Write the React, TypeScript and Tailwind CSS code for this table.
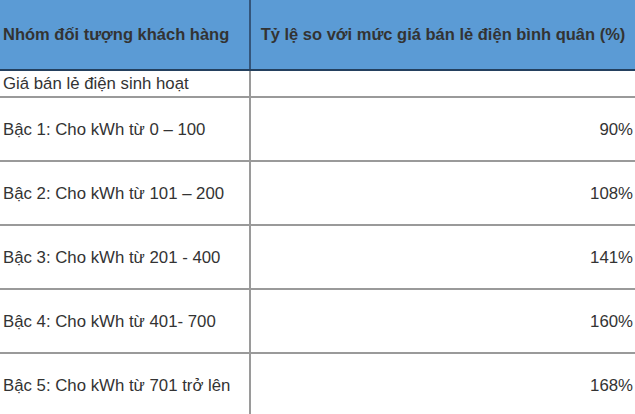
const rows = [
  { name: "Bậc 1: Cho kWh từ 0 – 100", value: "90%" },
  { name: "Bậc 2: Cho kWh từ 101 – 200", value: "108%" },
  { name: "Bậc 3: Cho kWh từ 201 - 400", value: "141%" },
  { name: "Bậc 4: Cho kWh từ 401- 700", value: "160%" },
  { name: "Bậc 5: Cho kWh từ 701 trở lên", value: "168%" },
];

export default function App() {
  return (
    <div
      className="w-[635px] h-[414px] overflow-hidden bg-white text-[16.8px] text-[#333]"
      style={{ fontFamily: '"Liberation Sans", Arial, sans-serif' }}
    >
      {/* header */}
      <div className="flex h-[71px] bg-[#5b9bd5] border-b-2 border-[#24405e] font-bold text-[16.5px]">
        <div className="w-[249px] shrink-0 flex items-center pl-[3px] whitespace-nowrap">Nhóm đối tượng khách hàng</div>
        <div className="w-[2px] shrink-0 bg-[#34557a]" />
        <div className="flex-1 flex items-center justify-center whitespace-nowrap">
          Tỷ lệ so với mức giá bán lẻ điện bình quân (%)
        </div>
      </div>

      <div className="flex h-[27px] border-b-2 border-[#9a9a9a]">
        <div className="w-[249px] shrink-0 flex items-center pl-[3px]">Giá bán lẻ điện sinh hoạt</div>
        <div className="w-[2px] shrink-0 bg-[#9a9a9a]" />
        <div className="flex-1" />
      </div>

      {rows.map((r) => (
        <div key={r.name} className="flex h-[64px] border-b-2 border-[#9a9a9a]">
          <div className="w-[249px] shrink-0 flex items-center pl-[3px] pt-[2px]">{r.name}</div>
          <div className="w-[2px] shrink-0 bg-[#9a9a9a]" />
          <div className="flex-1 flex items-center justify-end pr-[2px] pt-[2px]">{r.value}</div>
        </div>
      ))}
    </div>
  );
}
